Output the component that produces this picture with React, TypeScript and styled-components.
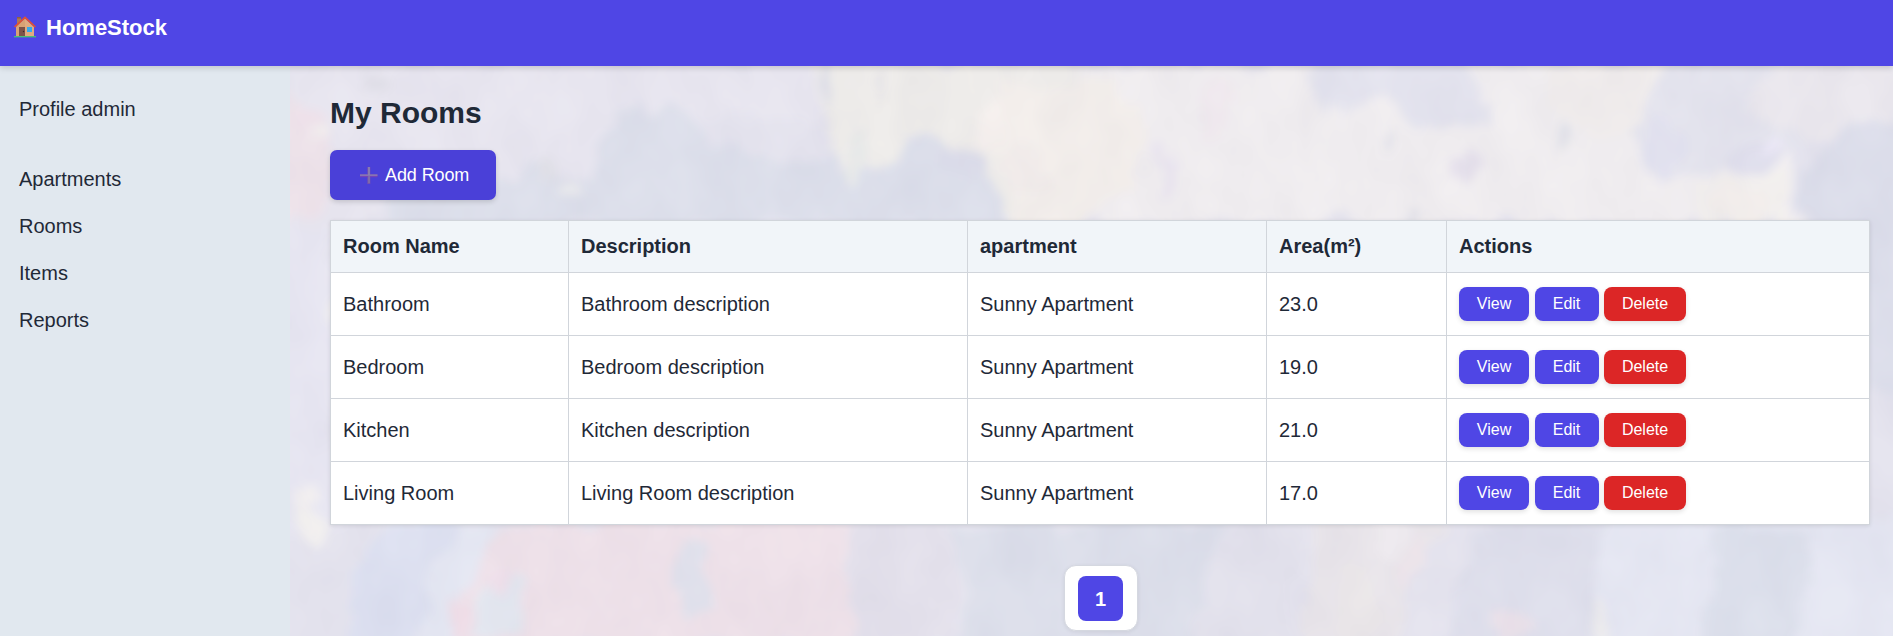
import React from 'react';
import styled, { createGlobalStyle } from 'styled-components';

const GlobalStyle = createGlobalStyle`
  * { box-sizing: border-box; }
  body {
    margin: 0;
    font-family: "Liberation Sans", Arial, sans-serif;
    font-size: 20px;
    color: #1f2937;
    overflow: hidden;
  }
`;

const Page = styled.div`
  display: flex;
  flex-direction: column;
  height: 636px;
`;

const Header = styled.header`
  position: relative;
  z-index: 2;
  flex: none;
  display: flex;
  align-items: flex-start;
  gap: 10px;
  height: 66px;
  padding: 16px 14px;
  background: #4f46e5;
  box-shadow: 0 2px 6px rgba(0, 0, 0, 0.15);
`;

const Brand = styled.span`
  color: #fff;
  font-size: 22px;
  font-weight: 700;
  line-height: 23px;
`;

const Body = styled.div`
  flex: 1;
  display: flex;
  min-height: 0;
`;

const Sidebar = styled.nav`
  flex: none;
  display: flex;
  flex-direction: column;
  width: 290px;
  padding: 20px 19px;
  background: #e1e8ef;
`;

const SideLink = styled.a<{ $spaced?: boolean }>`
  height: 47px;
  line-height: 46px;
  margin-bottom: ${(p) => (p.$spaced ? 23 : 0)}px;
`;

const Main = styled.main`
  position: relative;
  flex: 1;
  display: flex;
  flex-direction: column;
  align-items: flex-start;
  padding: 29px 22px 0 40px;
  overflow: hidden;
  background: #e3e2ed;
`;

const Backdrop = styled.svg`
  position: absolute;
  inset: 0;
  width: 1603px;
  height: 570px;
`;

const Content = styled.div`
  position: relative;
  display: flex;
  flex-direction: column;
  align-items: flex-start;
  width: 100%;
`;

const Title = styled.h1`
  margin: 0 0 19px;
  font-size: 30px;
  line-height: 36px;
`;

const AddButton = styled.button`
  display: flex;
  align-items: center;
  gap: 7px;
  width: 166px;
  height: 50px;
  margin-bottom: 20px;
  padding: 0 0 0 29px;
  border: 0;
  border-radius: 7px;
  background: #4a40d8;
  box-shadow: 0 2px 5px rgba(0, 0, 0, 0.15);
  color: #fff;
  font: 500 18px "Liberation Sans", Arial, sans-serif;
  letter-spacing: -0.1px;
`;

const Table = styled.table`
  width: 1539px;
  table-layout: fixed;
  border-collapse: collapse;
  background: #fff;
  box-shadow: 0 1px 4px rgba(0, 0, 0, 0.1);
`;

const HeadCell = styled.th`
  height: 52px;
  padding: 0 12px;
  border: 1px solid #d1d5db;
  background: #f1f5f9;
  text-align: left;
`;

const Cell = styled.td`
  height: 63px;
  padding: 0 12px;
  border: 1px solid #d1d5db;
`;

const Actions = styled.div`
  display: flex;
  gap: 5.5px;
`;

const ActionButton = styled.button<{ $width: number; $danger?: boolean }>`
  width: ${(p) => p.$width}px;
  height: 34px;
  padding: 0 0 1px;
  border: 0;
  border-radius: 8px;
  background: ${(p) => (p.$danger ? '#dc2626' : '#4f46e5')};
  box-shadow: 0 2px 5px rgba(0, 0, 0, 0.12);
  color: #fff;
  font: 500 16px "Liberation Sans", Arial, sans-serif;
`;

const Pagination = styled.div`
  align-self: center;
  display: flex;
  align-items: center;
  justify-content: center;
  width: 74px;
  height: 66px;
  margin-top: 40px;
  border: 1px solid #d5d8e0;
  border-radius: 12px;
  background: #fff;
  box-shadow: 0 1px 4px rgba(0, 0, 0, 0.07);
`;

const PageNumber = styled.span`
  width: 45px;
  height: 45px;
  border-radius: 8px;
  background: #4f46e5;
  color: #fff;
  font-weight: 700;
  line-height: 46px;
  text-align: center;
`;

const House = () => (
  <svg width="22" height="22" viewBox="0 0 22 22">
    <rect x="3" y="1" width="4" height="9" fill="#a9795a" />
    <rect x="3" y="1" width="4" height="1.500" fill="#8f6045" />
    <path d="M2 11 11 2.500 20 11v9.500H2z" fill="#e0ab80" />
    <path d="M2 11 11 2.500v18H2z" fill="#cf9669" opacity=".45" />
    <path d="M.6 11 11 1.300 21.400 11" fill="none" stroke="#e5502f" strokeWidth="1.700" />
    <rect x="5" y="11" width="6" height="9" fill="#7d5348" />
    <circle cx="9.500" cy="15.500" r=".7" fill="#3d2928" />
    <rect x="13" y="11" width="5" height="5" fill="#35a9ed" />
    <path d="M0 20.700h22" stroke="#45c473" strokeWidth="1.300" />
  </svg>
);

const Plus = () => (
  <svg width="19" height="19" viewBox="0 0 19 19">
    <path d="M8.300 1h3v17h-3z" fill="#7652ad" />
    <path d="M1 8.200h17.500v3H1z" fill="#7443b9" />
    <path d="M9.200 1h1.600v7.400h7.700v1.300H1V8.400h8.200z" fill="#8d86b0" />
    <path d="M9.300 9.700h1.500V17H9.300z" fill="#8275a8" />
  </svg>
);

/* Painted patches: colour, then outline in the coordinates of the whole window. */
const washes: [string, string][] = [
  ['#e7e5ef', '290,60 830,60 810,120 640,120 560,190 400,225 290,230'],
  ['#dbdeea', '620,110 680,108 705,145 800,160 930,140 985,165 1010,225 388,225 400,185 480,190 530,165 590,175'],
  ['#eeece9', '810,60 1330,60 1310,110 1290,225 1010,225 975,150 915,140 860,185 825,150 815,95'],
  ['#f0edef', '1080,60 1690,60 1640,130 1670,180 1790,160 1805,225 1080,225'],
  ['#f3eeea', '990,90 1120,70 1150,150 1090,225 1015,225'],
  ['#e3e3ee', '1320,60 1460,60 1490,120 1440,130 1380,100 1325,110'],
  ['#f1edec', '1540,60 1680,60 1640,125 1610,150 1560,125'],
  ['#e3e3ed', '1680,60 1893,60 1893,125 1820,140 1730,170 1650,175 1635,130'],
  ['#eae7ed', '1770,60 1910,60 1900,120 1800,145 1745,110'],
  ['#dbddea', '1840,130 1910,110 1910,390 1865,390 1810,225 1800,175'],
  ['#f1eeec', '1710,180 1785,175 1800,225 1700,225'],
  ['#eee2e9', '280,80 320,120 340,165 315,215 280,230'],
  ['#e6e5f1', '280,230 335,225 335,520 280,530'],
  ['#dbdff0', '380,520 450,520 435,600 400,650 350,650 355,580'],
  ['#e3e6f2', '450,520 540,520 500,560 470,650 410,650 435,570'],
  ['#eee0e8', '510,520 850,520 850,650 455,650 470,575'],
  ['#e2e6ef', '500,570 530,590 515,636 475,636 475,600'],
  ['#dfe0eb', '680,545 710,540 715,615 690,620 670,590'],
  ['#e3e0eb', '850,520 950,520 960,650 850,650'],
  ['#dadde9', '950,520 1250,520 1200,650 970,650'],
  ['#e1e0eb', '1220,520 1300,520 1290,650 1190,650'],
  ['#e8e4e9', '1310,520 1450,520 1420,570 1400,650 1310,650'],
  ['#dddeeb', '1480,520 1610,520 1590,650 1440,650'],
  ['#e4e6f2', '1600,520 1910,520 1910,650 1590,650'],
  ['#dbdfeb', '1720,525 1820,530 1790,650 1700,650'],
];

/* Small dabs of paint: centre x, centre y, radius x, radius y, colour. */
const dabs: [number, number, number, number, string][] = [
  [565, 187, 12, 7, '#eeeeef'], [548, 172, 10, 6, '#dedee5'],
  [826, 80, 5, 18, '#d7d9e6'], [880, 88, 5, 17, '#e2e0e3'],
  [990, 125, 18, 22, '#f5efec'], [860, 155, 14, 30, '#e7e9e8'],
  [960, 160, 30, 16, '#dadbe9'], [1020, 170, 22, 26, '#f1ebe9'],
  [1385, 143, 6, 12, '#e1e1e8'], [1467, 165, 14, 18, '#e3deea'],
  [1558, 140, 9, 12, '#e0e1e8'], [1415, 210, 8, 15, '#dfdfe7'],
  [1166, 170, 7, 22, '#e9e4ef'], [1220, 110, 18, 34, '#f0e9ee'],
  [1660, 150, 20, 28, '#e0e0ee'], [1750, 163, 24, 14, '#dddceb'],
  [1765, 152, 8, 7, '#ebe7f7'], [1745, 205, 24, 18, '#f3eeeb'],
  [308, 500, 10, 14, '#f1eeef'], [312, 525, 14, 20, '#f3f1ef'], [330, 313, 7, 14, '#f1efed'],
  [463, 625, 12, 25, '#f0dde7'], [500, 585, 15, 14, '#efdfea'],
  [1415, 565, 12, 24, '#ece3e9'], [1395, 535, 10, 20, '#ece8ed'],
  [1510, 628, 18, 15, '#eae0e9'], [1600, 620, 10, 22, '#efeeef'],
  [1355, 600, 18, 38, '#e9e5e7'], [375, 81, 18, 8, '#dedde6'],
  [308, 120, 15, 14, '#eee0e9'], [320, 137, 14, 9, '#f0ebec'],
];

const Painting = () => (
  <Backdrop viewBox="290 66 1603 570" preserveAspectRatio="none" aria-hidden="true">
    <defs>
      <filter id="brush" x="250" y="30" width="1683" height="650" filterUnits="userSpaceOnUse" colorInterpolationFilters="sRGB">
        <feTurbulence type="fractalNoise" baseFrequency="0.025 0.018" numOctaves="4" seed="8" result="noise" />
        <feDisplacementMap in="SourceGraphic" in2="noise" scale="42" xChannelSelector="R" yChannelSelector="G" />
        <feGaussianBlur stdDeviation="5" />
      </filter>
      <filter id="mottle" x="290" y="66" width="1603" height="570" filterUnits="userSpaceOnUse" colorInterpolationFilters="sRGB">
        <feTurbulence type="fractalNoise" baseFrequency="0.02 0.014" numOctaves="3" seed="21" />
        <feColorMatrix values="0 0 0 .4 .7  0 0 0 .4 .69  0 0 0 .3 .78  0 0 0 0 .1" />
      </filter>
    </defs>
    <g filter="url(#brush)">
      <rect x="200" y="0" width="1800" height="710" fill="#e3e2ed" />
      {washes.map(([fill, points], i) => <polygon key={i} fill={fill} points={points} />)}
      {dabs.map(([cx, cy, rx, ry, fill], i) => (
        <ellipse key={i} cx={cx} cy={cy} rx={rx} ry={ry} fill={fill} />
      ))}
    </g>
    <rect x="290" y="66" width="1603" height="570" filter="url(#mottle)" />
  </Backdrop>
);

const columns: [string, number][] = [
  ['Room Name', 238], ['Description', 399], ['apartment', 299], ['Area(m²)', 180], ['Actions', 423],
];

const rooms = [
  { name: 'Bathroom', area: '23.0' },
  { name: 'Bedroom', area: '19.0' },
  { name: 'Kitchen', area: '21.0' },
  { name: 'Living Room', area: '17.0' },
];

export default function App() {
  return (
    <Page>
      <GlobalStyle />
      <Header>
        <House />
        <Brand>HomeStock</Brand>
      </Header>
      <Body>
        <Sidebar>
          <SideLink $spaced>Profile admin</SideLink>
          <SideLink>Apartments</SideLink>
          <SideLink>Rooms</SideLink>
          <SideLink>Items</SideLink>
          <SideLink>Reports</SideLink>
        </Sidebar>
        <Main>
          <Painting />
          <Content>
            <Title>My Rooms</Title>
            <AddButton><Plus />Add Room</AddButton>
            <Table>
              <colgroup>
                {columns.map(([label, width]) => <col key={label} width={width} />)}
              </colgroup>
              <thead>
                <tr>{columns.map(([label]) => <HeadCell key={label}>{label}</HeadCell>)}</tr>
              </thead>
              <tbody>
                {rooms.map((room) => (
                  <tr key={room.name}>
                    <Cell>{room.name}</Cell>
                    <Cell>{room.name} description</Cell>
                    <Cell>Sunny Apartment</Cell>
                    <Cell>{room.area}</Cell>
                    <Cell>
                      <Actions>
                        <ActionButton $width={70}>View</ActionButton>
                        <ActionButton $width={64}>Edit</ActionButton>
                        <ActionButton $width={82} $danger>Delete</ActionButton>
                      </Actions>
                    </Cell>
                  </tr>
                ))}
              </tbody>
            </Table>
            <Pagination><PageNumber>1</PageNumber></Pagination>
          </Content>
        </Main>
      </Body>
    </Page>
  );
}
